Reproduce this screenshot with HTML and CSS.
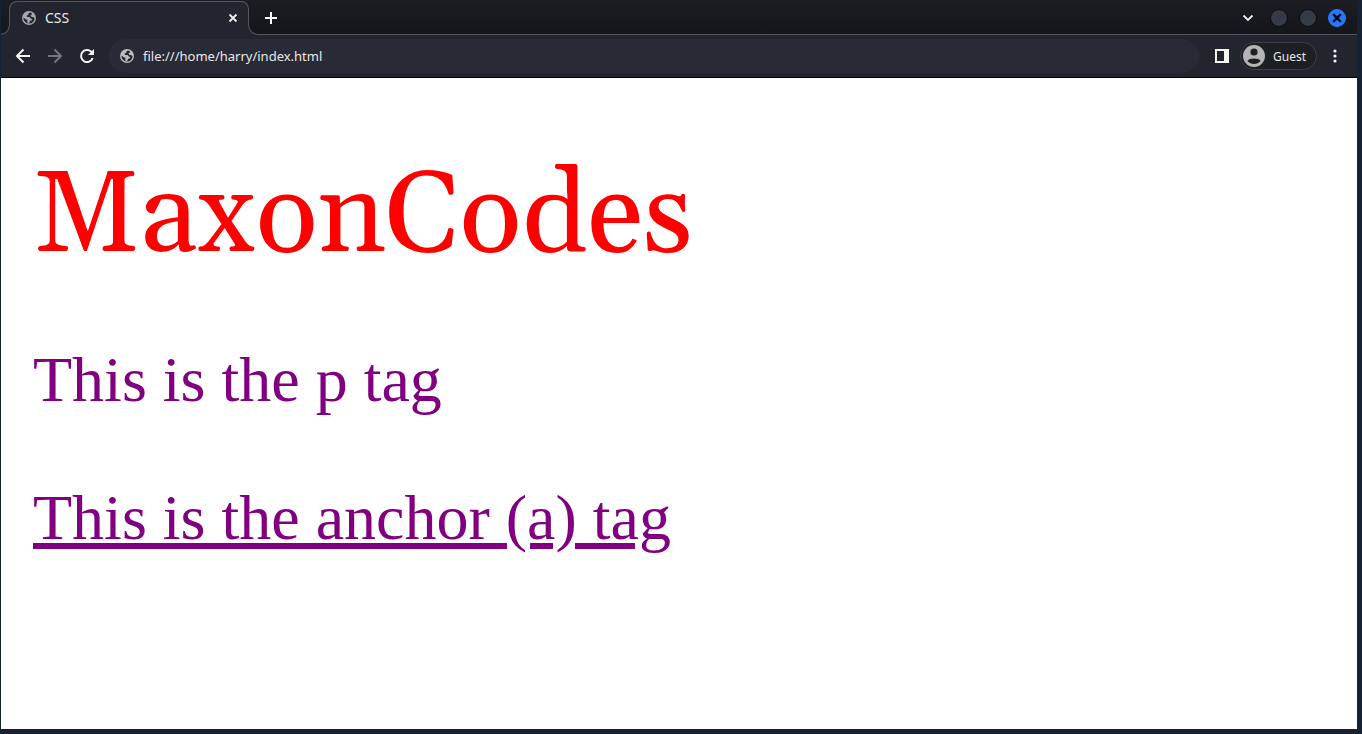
FILE: index.html
```html
<!DOCTYPE html>
<html lang="en">
<head>
<meta charset="utf-8">
<title>CSS</title>
<link rel="stylesheet" href="styles.css">
</head>
<body>
<svg class="defs" aria-hidden="true">
  <symbol id="globe" viewBox="0 0 14 14">
    <circle cx="7" cy="7" r="7" fill="currentColor"/>
    <path d="M8 1.6 6.4 2.4 6.2 4 4.6 4.6 5 6H7.6L8.8 7.6 10.4 8.2 9.6 9.4 8 9.8 7.6 11.6 5.8 12.6 8 12.6C11 12 12.6 9.600 12.600 7.200L11.600 6.200 9.800 6 8.400 4.400 9.800 3.600 10 2.200ZM1.400 6.600 4 8.400 5.600 8.800 5.200 10.200 5.800 12.400C3 11.800 1.200 9.400 1.400 6.600Z" fill="#252730"/>
  </symbol>
</svg>
<div class="window">
  <header class="tabs">
    <div class="tab">
      <svg class="favicon"><use href="#globe"/></svg>
      <span class="tab-title">CSS</span>
      <button class="icon-button close" aria-label="Close tab"><svg width="10" height="10" viewBox="0 0 10 10"><path d="m1.500 1.500 7 7m0-7-7 7" stroke="#eee" stroke-width="1.800"/></svg></button>
    </div>
    <button class="icon-button new-tab" aria-label="New tab"><svg width="12" height="12" viewBox="0 0 12 12"><path d="M6 0v12M0 6h12" stroke="#fff" stroke-width="2"/></svg></button>
    <div class="controls">
      <button class="icon-button" aria-label="Search tabs"><svg width="12" height="8" viewBox="0 0 12 8"><path d="m1.500 1.500 4.500 4.500 4.500-4.500" fill="none" stroke="#eee" stroke-width="1.800"/></svg></button>
      <button class="dot" aria-label="Minimize"></button>
      <button class="dot" aria-label="Maximize"></button>
      <button class="dot dot-close" aria-label="Close window"><svg width="10" height="10" viewBox="0 0 10 10"><path d="m1.200 1.200 7.600 7.600m0-7.600-7.600 7.600" stroke="#080a12" stroke-width="2.400"/></svg></button>
    </div>
  </header>
  <nav class="toolbar">
    <button class="icon-button nav-button" aria-label="Back"><svg width="16" height="16" viewBox="0 0 16 16"><path d="M15 8H2m6.500-6.500L2 8l6.500 6.500" fill="none" stroke="#f4f4f2" stroke-width="2"/></svg></button>
    <button class="icon-button nav-button" aria-label="Forward"><svg width="16" height="16" viewBox="0 0 16 16"><path d="M1 8h13M7.500 1.500 14 8l-6.500 6.500" fill="none" stroke="#75767b" stroke-width="2"/></svg></button>
    <button class="icon-button nav-button" aria-label="Reload"><svg width="16" height="16" viewBox="0 0 16 16"><path d="M13.700 10A6 6 0 1 1 12.300 3.800L13.500 5" fill="none" stroke="#f4f4f2" stroke-width="2"/><path d="M15 1v6H9Z" fill="#f4f4f2"/></svg></button>
    <label class="address">
      <svg class="favicon"><use href="#globe"/></svg>
      <input type="text" value="file:///home/harry/index.html" aria-label="Address">
    </label>
    <button class="icon-button panel" aria-label="Side panel"><svg width="14" height="14" viewBox="0 0 14 14"><path d="M0 0h14v14H0zM2 2v10h7V2z" fill="#f4f4f2" fill-rule="evenodd"/></svg></button>
    <button class="profile">
      <svg width="22" height="22" viewBox="0 0 22 22"><circle cx="11" cy="11" r="11" fill="#b4b4b4"/><circle cx="11" cy="7" r="3.600" fill="#1e1f22"/><path d="M4.500 16C6 12.800 16 12.800 17.500 16 14.500 20 7.500 20 4.500 16Z" fill="#1e1f22"/></svg>
      <span>Guest</span>
    </button>
    <button class="icon-button menu" aria-label="Menu"><svg width="4" height="14" viewBox="0 0 4 14" fill="#f4f4f2"><circle cx="2" cy="2" r="1.600"/><circle cx="2" cy="7" r="1.600"/><circle cx="2" cy="12" r="1.600"/></svg></button>
  </nav>
  <main class="page">
    <h1>MaxonCodes</h1>
    <p>This is the p tag</p>
    <a href="#">This is the anchor (a) tag</a>
  </main>
</div>
</body>
</html>
```
FILE: styles.css
```css
* { box-sizing: border-box; }
body {
  margin: 0;
  background: #152233;
  font-family: "Noto Sans", sans-serif;
  font-size: 13px;
  color: #e8e8e8;
}
button, input { font: inherit; color: inherit; border: 0; padding: 0; background: none; }
svg { display: block; flex: none; }
.defs { position: absolute; width: 0; height: 0; }
.window {
  display: flex;
  flex-direction: column;
  min-height: 100vh;
  padding: 0 5px 5px 1px;
}
.tabs {
  display: flex;
  height: 35px;
  padding-left: 8px;
  background: linear-gradient(#1c1d22, #15161a);
  box-shadow: inset 0 -1px #55565d;
}
.tab {
  position: relative;
  display: flex;
  align-items: center;
  width: 240px;
  height: 34px;
  margin-top: 1px;
  padding: 0 10px 2px 12px;
  background: #23252e;
  border: 1px solid #55565d;
  border-bottom: 0;
  border-radius: 8px 8px 0 0;
}
/* Flared feet that join the active tab to the toolbar */
.tab::before, .tab::after {
  content: "";
  position: absolute;
  bottom: 0;
  width: 9px;
  height: 9px;
}
.tab::before {
  left: -9px;
  background: radial-gradient(circle at 0 0, transparent 7px, #55565d 8px, #23252e 9px);
}
.tab::after {
  right: -9px;
  background: radial-gradient(circle at 100% 0, transparent 7px, #55565d 8px, #23252e 9px);
}
.favicon { width: 14px; height: 14px; color: #a5a7ad; }
.tab-title { flex: 1; margin-left: 9px; font-size: 14px; }
.icon-button { display: grid; place-items: center; }
.new-tab { width: 28px; margin-left: 8px; }
.controls {
  display: flex;
  align-items: center;
  gap: 11px;
  margin-left: auto;
  padding-right: 11px;
}
.controls > .icon-button { margin-right: 5px; }
.dot {
  display: grid;
  place-items: center;
  width: 18px;
  height: 18px;
  border: 1px solid #090a0d;
  border-radius: 50%;
  background: #363b48;
}
.dot-close { background: #2777ff; border-color: #2777ff; }
.toolbar {
  display: flex;
  align-items: center;
  height: 43px;
  padding: 0 12px 0 6px;
  background: #23252e;
  border-bottom: 1px solid #050507;
}
.nav-button { width: 32px; height: 32px; }
.address {
  display: flex;
  flex: 1;
  align-items: center;
  gap: 9px;
  height: 34px;
  margin-left: 6px;
  padding-left: 11px;
  border-radius: 17px;
  background: #282a35;
}
.address .favicon { color: #bdbdbd; }
.address input { flex: 1; min-width: 0; }
.panel { width: 14px; margin-left: 16px; }
.profile {
  display: flex;
  align-items: center;
  gap: 8px;
  height: 28px;
  margin-left: 11px;
  padding: 0 10px 0 2px;
  border: 1px solid #3c3d40;
  border-radius: 14px;
  background: #1e1f22;
  font-size: 12px;
}
.menu { width: 20px; margin-left: 8px; }
.page {
  flex: 1;
  padding: 70px 32px;
  background: #fff;
  color: purple;
  font-family: "Liberation Serif", serif;
  font-size: 64px;
  line-height: 74px;
}
.page h1 {
  margin: 0 0 57px;
  color: red;
  font-family: Georgia, Gelasio, "Liberation Serif", serif;
  font-size: 115px;
  font-weight: 400;
  line-height: 138px;
}
.page p { margin: 0 0 64px; }
.page a { color: inherit; text-decoration: underline; }
```
